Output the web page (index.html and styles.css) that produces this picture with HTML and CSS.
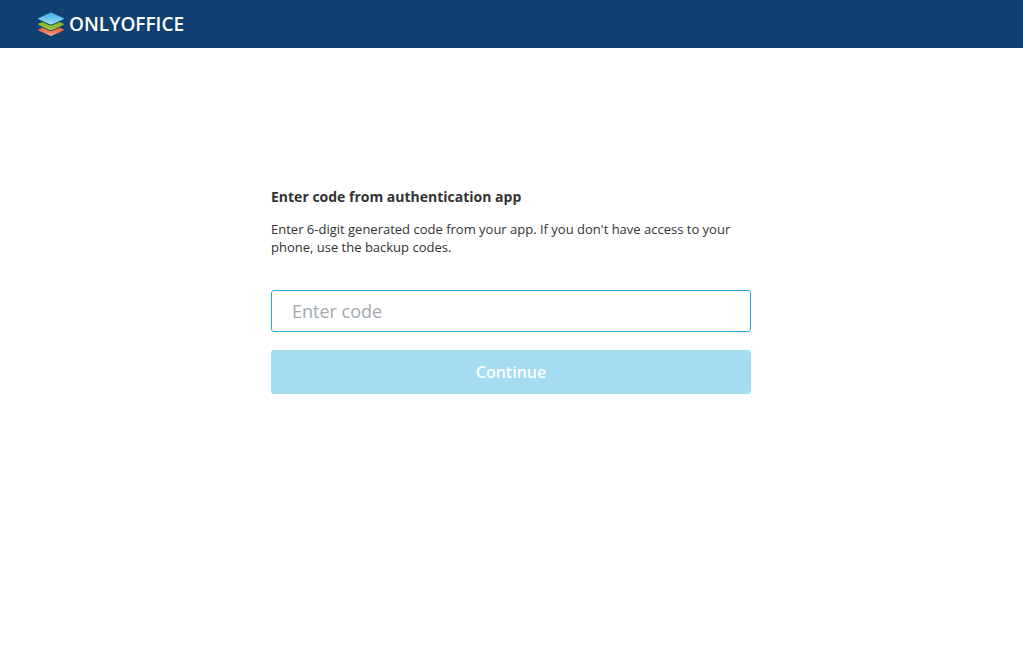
FILE: index.html
```html
<!DOCTYPE html>
<html lang="en">
<head>
<meta charset="utf-8">
<title>ONLYOFFICE</title>
<link rel="stylesheet" href="styles.css">
</head>
<body>
<header class="topbar">
  <a class="brand" href="#">
    <svg class="brand-icon" viewBox="0 0 26 24" aria-hidden="true">
      <defs>
        <linearGradient id="orange" x1="0" x2="0" y1="0" y2="1"><stop offset="0" stop-color="#e8592f"/><stop offset="1" stop-color="#f5a184"/></linearGradient>
        <linearGradient id="green" x1="0" x2="0" y1="0" y2="1"><stop offset="0" stop-color="#7fb41c"/><stop offset="1" stop-color="#a5cc48"/></linearGradient>
        <linearGradient id="blue" x1="0" x2="0" y1="0" y2="1"><stop offset="0" stop-color="#35aee0"/><stop offset="1" stop-color="#a4dcf3"/></linearGradient>
      </defs>
      <path fill="url(#orange)" d="M11.6 23.6.7 18.6c-.9-.4-.9-1 0-1.4l3.8-1.7 7 3.2c.9.4 2.2.4 3.1 0l7-3.2 3.7 1.7c.9.4.9 1 0 1.4l-10.9 5c-.8.4-2 .4-2.8 0z"/>
      <path fill="url(#green)" d="M11.6 18 .7 13c-.9-.4-.9-1 0-1.4l3.7-1.7 7.2 3.3c.8.4 2 .4 2.8 0l7.2-3.3 3.7 1.7c.9.4.9 1 0 1.4l-10.9 5c-.8.4-2 .4-2.8 0z"/>
      <path fill="url(#blue)" d="M11.6 12.3.7 7.3c-.9-.4-.9-1 0-1.4l10.9-5c.8-.4 2-.4 2.8 0l10.9 5c.9.4.9 1 0 1.4l-10.9 5c-.8.4-2 .4-2.8 0z"/>
    </svg>
    <span class="brand-name">ONLYOFFICE</span>
  </a>
</header>
<main class="page">
  <form class="auth">
    <h1 class="auth-title">Enter code from authentication app</h1>
    <p class="auth-text" id="hint">Enter 6-digit generated code from your app. If you don't have access to your phone, use the backup codes.</p>
    <input class="auth-input" type="text" placeholder="Enter code" aria-label="Enter code" aria-describedby="hint">
    <button class="auth-button" type="button" disabled>Continue</button>
  </form>
</main>
</body>
</html>
```
FILE: styles.css
```css
* { box-sizing: border-box; }

body {
  margin: 0;
  background: #fff;
  color: #333;
  font-family: "Open Sans", sans-serif;
}

.topbar {
  display: flex;
  align-items: center;
  height: 48px;
  padding: 0 38px;
  background: #0f4071;
}

.brand {
  display: flex;
  align-items: center;
  gap: 5px;
  color: #fff;
  text-decoration: none;
}

.brand-icon { width: 26px; height: 24px; }

.brand-name {
  font-size: 19px;
  font-weight: 600;
  line-height: 24px;
}

.page {
  display: flex;
  justify-content: center;
  padding: 139px 17px 32px 16px;
}

.auth {
  display: flex;
  flex-direction: column;
  width: 100%;
  max-width: 480px;
}

.auth-title {
  margin: 0 0 13px;
  font-size: 14px;
  font-weight: 700;
  line-height: 20px;
}

.auth-text {
  margin: 0 0 34px;
  font-size: 13px;
  line-height: 18px;
}

.auth-input {
  height: 42px;
  margin: 0 0 18px;
  padding: 0 20px;
  border: 1px solid #2da7db;
  border-radius: 3px;
  outline: none;
  background: #fff;
  color: #333;
  font: 400 18px "Open Sans", sans-serif;
}

.auth-input::placeholder { color: #a3a9ae; }

.auth-button {
  height: 44px;
  padding: 0 16px;
  border: 0;
  border-radius: 3px;
  background: #a6dcf2;
  color: #fff;
  font: 600 16px "Open Sans", sans-serif;
}
```
